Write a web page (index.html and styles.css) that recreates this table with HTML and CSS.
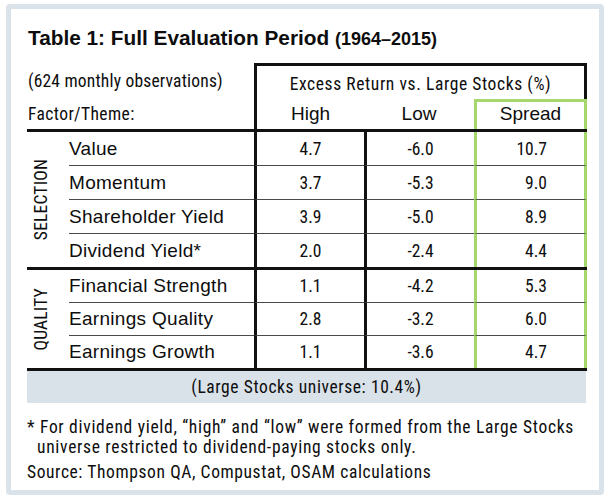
FILE: index.html
```html
<!DOCTYPE html>
<html>
<head>
<meta charset="utf-8">
<link rel="stylesheet" href="styles.css">
</head>
<body>
<div class="card">
  <div class="title">Table 1: Full Evaluation Period <span class="yrs">(1964–2015)</span></div>
  <div class="tbl">
    <div class="hdr1 cond">
      <div class="obs">(624 monthly observations)</div>
      <div class="excess">Excess Return vs. Large Stocks (%)</div>
    </div>
    <div class="hdr2">
      <div class="ft cond">Factor/Theme:</div>
      <div class="hc hi">High</div>
      <div class="hc">Low</div>
      <div class="hc sp">Spread</div>
    </div>
    <div class="sect sel">
      <div class="grp cond"><span>SELECTION</span></div>
      <div class="rows">
        <div class="row"><div class="lbl">Value</div><div class="n hi">4.7</div><div class="n lo">-6.0</div><div class="n sp">10.7</div></div>
        <div class="row"><div class="lbl">Momentum</div><div class="n hi">3.7</div><div class="n lo">-5.3</div><div class="n sp">9.0</div></div>
        <div class="row"><div class="lbl">Shareholder Yield</div><div class="n hi">3.9</div><div class="n lo">-5.0</div><div class="n sp">8.9</div></div>
        <div class="row"><div class="lbl">Dividend Yield*</div><div class="n hi">2.0</div><div class="n lo">-2.4</div><div class="n sp">4.4</div></div>
      </div>
    </div>
    <div class="sect qual">
      <div class="grp cond"><span>QUALITY</span></div>
      <div class="rows">
        <div class="row"><div class="lbl">Financial Strength</div><div class="n hi">1.1</div><div class="n lo">-4.2</div><div class="n sp">5.3</div></div>
        <div class="row"><div class="lbl">Earnings Quality</div><div class="n hi">2.8</div><div class="n lo">-3.2</div><div class="n sp">6.0</div></div>
        <div class="row"><div class="lbl">Earnings Growth</div><div class="n hi">1.1</div><div class="n lo">-3.6</div><div class="n sp">4.7</div></div>
      </div>
    </div>
    <div class="band cond">(Large Stocks universe: 10.4%)</div>
  </div>
  <div class="note cond">* For dividend yield, “high” and “low” were formed from the Large Stocks universe restricted to dividend-paying stocks only.</div>
  <div class="src cond">Source: Thompson QA, Compustat, OSAM calculations</div>
</div>
</body>
</html>
```
FILE: styles.css
```css
* { box-sizing: border-box; }

body {
  margin: 0;
  background: #ffffff;
  color: #0d0d0d;
  font-family: "Liberation Sans", Arial, sans-serif;
}

.card {
  margin: 4px 0 0 6px;
  width: 598px;
  border: 5px solid #dae2ea;
  border-radius: 4px;
  padding: 17px 0 8px 16px;
}

.title {
  font-weight: bold;
  font-size: 20.8px;
  line-height: 24px;
  margin: 0 0 12px 1px;
}

.title .yrs { font-size: 18px; }

.cond {
  font-family: "Liberation Sans Narrow", "Roboto Condensed", Roboto, sans-serif;
  font-size: 17.5px;
  letter-spacing: 0.6px;
}

.tbl { width: 560px; }

.hdr1 {
  display: grid;
  grid-template-columns: 227px 333px;
  height: 36px;
}

.obs {
  align-self: center;
  padding-left: 1px;
  letter-spacing: 0.2px;
}

.excess {
  border: 3px solid #111;
  border-bottom: 0;
  display: flex;
  align-items: center;
  justify-content: center;
  padding-top: 2px;
}

.hdr2 {
  display: grid;
  grid-template-columns: 227px 110px 110px 113px;
  height: 33px;
  border-bottom: 3px solid #111;
}

.ft {
  align-self: center;
  padding-left: 1px;
  letter-spacing: 0.4px;
}

.hc {
  display: flex;
  align-items: center;
  justify-content: center;
  font-size: 19px;
}

.hdr2 .hi { border-left: 3px solid #111; }

.hdr2 .sp {
  border: 3px solid #a6d76c;
  border-bottom: 0;
  padding-bottom: 3px;
}

.sect {
  display: flex;
  border-bottom: 3px solid #111;
}

.grp {
  width: 42px;
  display: flex;
  align-items: center;
  padding-left: 5px;
  letter-spacing: 0.2px;
}

.grp span {
  writing-mode: vertical-rl;
  transform: rotate(180deg);
  line-height: 18px;
}

.rows { width: 518px; }

.row {
  display: grid;
  grid-template-columns: 185px 110px 110px 113px;
  height: 33px;
}

.row + .row { height: 34px; }

.qual .row { height: 32px; }
.qual .row + .row { height: 33px; }

.row + .row > div { border-top: 1px solid #4a4a4a; }

.lbl {
  display: flex;
  align-items: center;
  font-size: 19px;
  letter-spacing: 0.3px;
}

.n {
  display: flex;
  align-items: center;
  justify-content: center;
  font-family: "Liberation Sans Narrow", "Roboto Condensed", Roboto, sans-serif;
  font-size: 17.5px;
}

.n.hi, .n.lo { border-left: 3px solid #111; }

.n.sp {
  border-left: 3px solid #a6d76c;
  border-right: 3px solid #a6d76c;
  justify-content: flex-end;
  padding-right: 37px;
}

.band {
  height: 32px;
  width: 559px;
  background: #d9e1e9;
  display: flex;
  align-items: center;
  justify-content: center;
}

.note {
  margin-top: 14px;
  line-height: 20px;
  padding-left: 10px;
  text-indent: -10px;
  padding-right: 12px;
  letter-spacing: 0.7px;
}

.src {
  margin-top: 5px;
  line-height: 20px;
}
```
